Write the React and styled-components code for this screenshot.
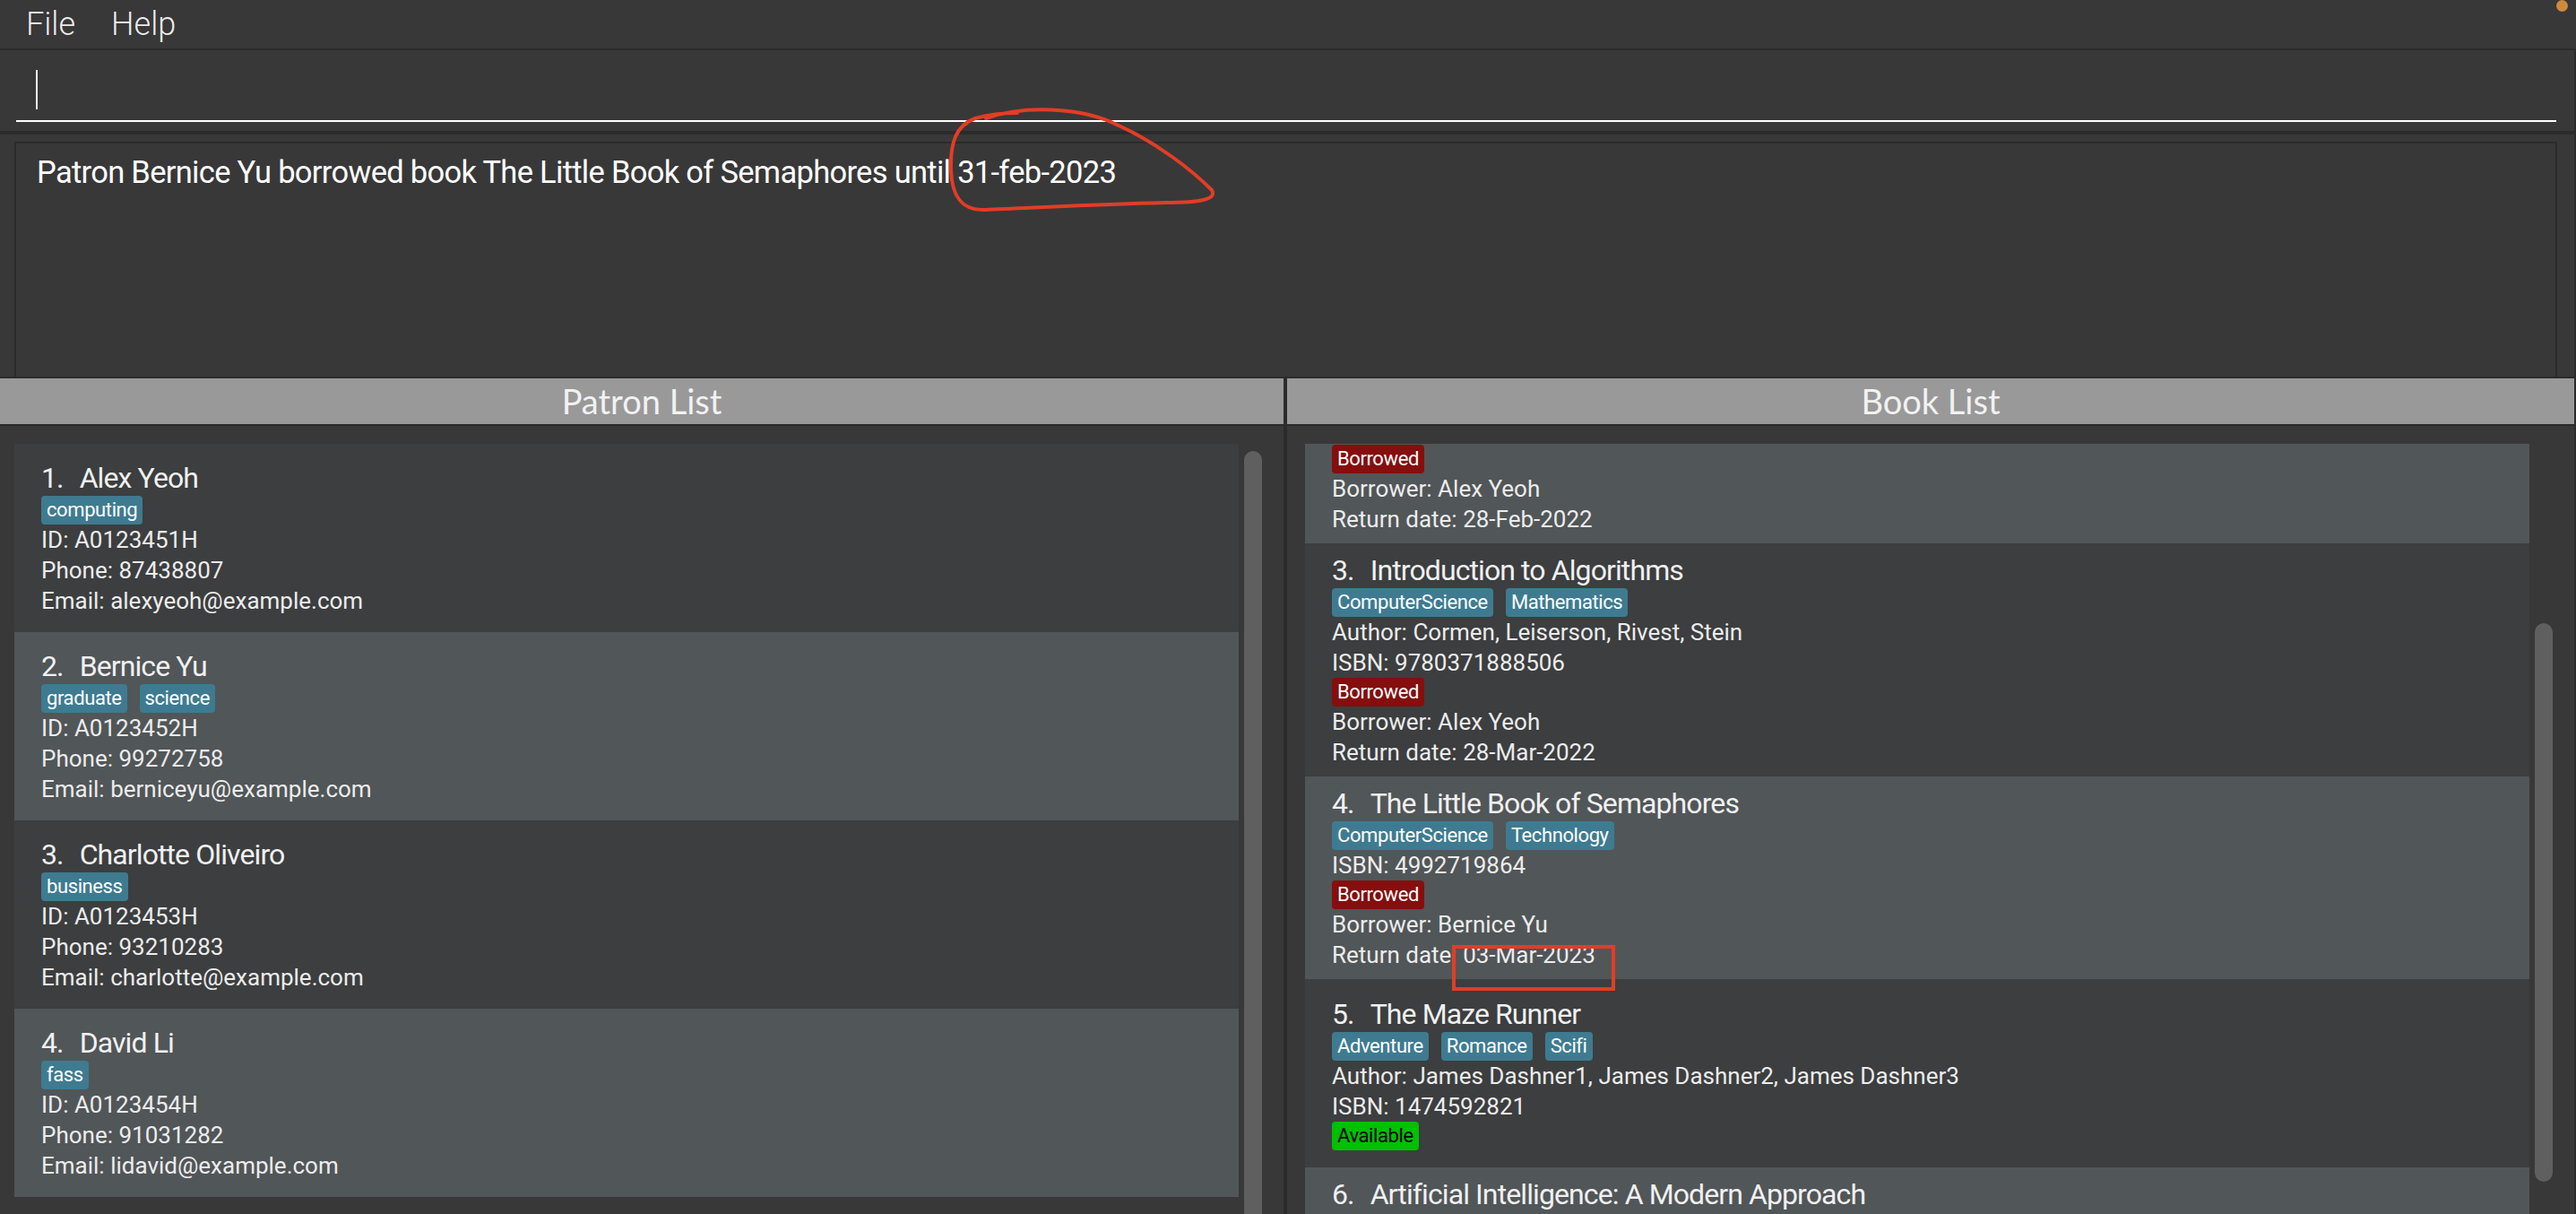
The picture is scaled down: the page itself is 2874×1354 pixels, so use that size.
import React from 'react';
import styled, { createGlobalStyle } from 'styled-components';

const GlobalStyle = createGlobalStyle`
  html, body {
    margin: 0;
    padding: 0;
    background: #383838;
    overflow: hidden;
  }
  * { box-sizing: border-box; }
`;

const FONT = `Roboto, "Open Sans", "Liberation Sans", sans-serif`;
const HEAD = `Lato, "Open Sans", "Liberation Sans", sans-serif`;
const LINE = '#2b2b2b';

const Window = styled.div`
  position: relative;
  width: 2874px;
  height: 1354px;
  display: flex;
  flex-direction: column;
  background: #383838;
  font-family: ${FONT};
  color: #ececec;
  overflow: hidden;
`;

const MenuBar = styled.div`
  height: 54px;
  display: flex;
  align-items: center;
  padding-left: 29px;
  gap: 40px;
`;

const MenuItem = styled.div`
  font-size: 36px;
  font-weight: 300;
  color: rgba(255, 255, 255, 0.92);
  line-height: 54px;
`;

const Main = styled.div`
  flex: 1;
  display: flex;
  flex-direction: column;
  border-right: 2px solid ${LINE};
  min-height: 0;
`;

const CommandPane = styled.div`
  height: 94px;
  border-top: 2px solid ${LINE};
  border-bottom: 2px solid ${LINE};
  padding: 0 20px 0 18px;
  display: flex;
  align-items: flex-start;
`;

const CommandField = styled.div`
  width: 100%;
  height: 80px;
  border-bottom: 2px solid #ffffff;
  display: flex;
  align-items: flex-end;
  padding: 0 0 12px 22px;
`;

const Caret = styled.div`
  width: 2px;
  height: 44px;
  background: #f4f4f4;
`;

const ResultPane = styled.div`
  height: 272px;
  border-top: 2px solid ${LINE};
  padding: 8px 19px 0 16px;
  display: flex;
`;

const ResultBox = styled.div`
  flex: 1;
  border: 2px solid ${LINE};
  border-bottom: none;
  padding: 8px 0 0 23px;
  font-size: 34.5px;
  font-weight: 400;
  letter-spacing: -0.7px;
  line-height: 48px;
  color: #ffffff;
`;

const Lists = styled.div`
  flex: 1;
  display: flex;
  border-top: 2px solid ${LINE};
  min-height: 0;
`;

const ListPane = styled.div`
  width: ${(p) => p.$width};
  flex: ${(p) => (p.$grow ? 1 : 'none')};
  display: flex;
  flex-direction: column;
  min-height: 0;
`;

const Divider = styled.div`
  width: 4px;
  background: ${LINE};
`;

const Header = styled.div`
  height: 53px;
  background: #999999;
  border-bottom: 2px solid ${LINE};
  text-align: center;
  font-family: ${HEAD};
  font-size: 38px;
  line-height: 50px;
  color: #f2f2f2;
`;

const ListBody = styled.div`
  flex: 1;
  display: flex;
  padding: 20px 21px 0 ${(p) => p.$padLeft}px;
  overflow: hidden;
  min-height: 0;
`;

const Cards = styled.div`
  width: 1366px;
  display: flex;
  flex-direction: column;
`;

const Track = styled.div`
  width: 26px;
  margin-left: 3px;
  padding: 0 3px;
`;

const Thumb = styled.div`
  width: 20px;
  border-radius: 10px;
  background: #5f5f5f;
`;

const Card = styled.div`
  flex: none;
  min-height: ${(p) => (p.$clipped ? 0 : 210)}px;
  padding: ${(p) => (p.$clipped ? '1px 30px 10px' : '10px 30px')};
  background: ${(p) => (p.$odd ? '#3c3e3f' : '#515658')};
  display: flex;
  flex-direction: column;
  justify-content: ${(p) => (p.$cut ? 'flex-start' : 'center')};
`;

const Title = styled.div`
  font-size: 32px;
  line-height: 40px;
  height: 40px;
  letter-spacing: -0.9px;
  color: #f0f0f0;
  display: flex;
  gap: 18px;
  white-space: nowrap;
`;

const Tags = styled.div`
  display: flex;
  flex-wrap: wrap;
  gap: 6px 14px;
`;

const Tag = styled.span`
  height: 32px;
  padding: 2px 6px;
  border-radius: 4px;
  font-size: 22px;
  line-height: 28px;
  letter-spacing: -0.4px;
  background: ${(p) => p.$bg || '#3e7b91'};
  color: ${(p) => p.$fg || '#ffffff'};
  white-space: nowrap;
`;

const Field = styled.div`
  font-size: 26px;
  line-height: 34px;
  height: 34px;
  color: #ececec;
  white-space: nowrap;
`;

const BadgeRow = styled.div`
  display: flex;
`;

const RecordDot = styled.div`
  position: absolute;
  left: 2852px;
  top: 0;
  width: 13px;
  height: 13px;
  border-radius: 50%;
  background: #cf8a3c;
`;

const Marks = styled.svg`
  position: absolute;
  left: 0;
  top: 0;
  pointer-events: none;
`;

const patrons = [
  { id: 1, name: 'Alex Yeoh', tags: ['computing'], sid: 'A0123451H', phone: '87438807', email: 'alexyeoh@example.com' },
  { id: 2, name: 'Bernice Yu', tags: ['graduate', 'science'], sid: 'A0123452H', phone: '99272758', email: 'berniceyu@example.com' },
  { id: 3, name: 'Charlotte Oliveiro', tags: ['business'], sid: 'A0123453H', phone: '93210283', email: 'charlotte@example.com' },
  { id: 4, name: 'David Li', tags: ['fass'], sid: 'A0123454H', phone: '91031282', email: 'lidavid@example.com' },
];

const books = [
  { id: 2, clipped: true, status: 'Borrowed', borrower: 'Alex Yeoh', due: '28-Feb-2022' },
  {
    id: 3, title: 'Introduction to Algorithms', tags: ['ComputerScience', 'Mathematics'],
    author: 'Cormen, Leiserson, Rivest, Stein', isbn: '9780371888506',
    status: 'Borrowed', borrower: 'Alex Yeoh', due: '28-Mar-2022',
  },
  {
    id: 4, title: 'The Little Book of Semaphores', tags: ['ComputerScience', 'Technology'],
    isbn: '4992719864', status: 'Borrowed', borrower: 'Bernice Yu', due: '03-Mar-2023',
  },
  {
    id: 5, title: 'The Maze Runner', tags: ['Adventure', 'Romance', 'Scifi'],
    author: 'James Dashner1, James Dashner2, James Dashner3', isbn: '1474592821', status: 'Available',
  },
  { id: 6, cut: true, title: 'Artificial Intelligence: A Modern Approach', tags: [] },
];

function Status({ status }) {
  if (!status) return null;
  const borrowed = status === 'Borrowed';
  return (
    <BadgeRow>
      <Tag $bg={borrowed ? '#850e0e' : '#00c000'} $fg={borrowed ? '#ffffff' : '#000000'}>
        {status}
      </Tag>
    </BadgeRow>
  );
}

function PatronCard({ patron }) {
  return (
    <Card $odd={patron.id % 2 === 1}>
      <Title>
        <span>{patron.id}.</span>
        <span>{patron.name}</span>
      </Title>
      <Tags>
        {patron.tags.map((t) => <Tag key={t}>{t}</Tag>)}
      </Tags>
      <Field>ID: {patron.sid}</Field>
      <Field>Phone: {patron.phone}</Field>
      <Field>Email: {patron.email}</Field>
    </Card>
  );
}

function BookCard({ book }) {
  return (
    <Card $odd={book.id % 2 === 1} $clipped={book.clipped} $cut={book.cut}>
      {book.title && (
        <Title>
          <span>{book.id}.</span>
          <span>{book.title}</span>
        </Title>
      )}
      {book.tags && book.tags.length > 0 && (
        <Tags>
          {book.tags.map((t) => <Tag key={t}>{t}</Tag>)}
        </Tags>
      )}
      {book.author && <Field>Author: {book.author}</Field>}
      {book.isbn && <Field>ISBN: {book.isbn}</Field>}
      <Status status={book.status} />
      {book.borrower && <Field>Borrower: {book.borrower}</Field>}
      {book.due && <Field>Return date: {book.due}</Field>}
    </Card>
  );
}

export default function App() {
  return (
    <Window>
      <GlobalStyle />
      <MenuBar>
        <MenuItem>File</MenuItem>
        <MenuItem>Help</MenuItem>
      </MenuBar>
      <Main>
        <CommandPane>
          <CommandField>
            <Caret />
          </CommandField>
        </CommandPane>
        <ResultPane>
          <ResultBox>Patron Bernice Yu borrowed book The Little Book of Semaphores until 31-feb-2023</ResultBox>
        </ResultPane>
        <Lists>
          <ListPane $width="1432px">
            <Header>Patron List</Header>
            <ListBody $padLeft={16}>
              <Cards>
                {patrons.map((p) => <PatronCard key={p.id} patron={p} />)}
              </Cards>
              <Track>
                <Thumb style={{ marginTop: 8, height: 900 }} />
              </Track>
            </ListBody>
          </ListPane>
          <Divider />
          <ListPane $grow>
            <Header>Book List</Header>
            <ListBody $padLeft={20}>
              <Cards>
                {books.map((b) => <BookCard key={b.id} book={b} />)}
              </Cards>
              <Track>
                <Thumb style={{ marginTop: 200, height: 623 }} />
              </Track>
            </ListBody>
          </ListPane>
        </Lists>
      </Main>
      <RecordDot />
      <Marks width="2874" height="1354" viewBox="0 0 2874 1354">
        <path
          d="M1100 132 C1140 118 1205 118 1248 140 C1292 160 1330 190 1352 212 C1358 222 1340 226 1300 226 C1220 228 1150 232 1098 234 C1070 235 1062 215 1061 190 C1060 160 1066 140 1088 132 C1102 128 1120 126 1135 126"
          fill="none"
          stroke="#e23d26"
          strokeWidth="4"
          strokeLinecap="round"
          strokeLinejoin="round"
        />
        <rect x="1622" y="1056" width="178" height="47" fill="none" stroke="#e23d26" strokeWidth="4" />
      </Marks>
    </Window>
  );
}
